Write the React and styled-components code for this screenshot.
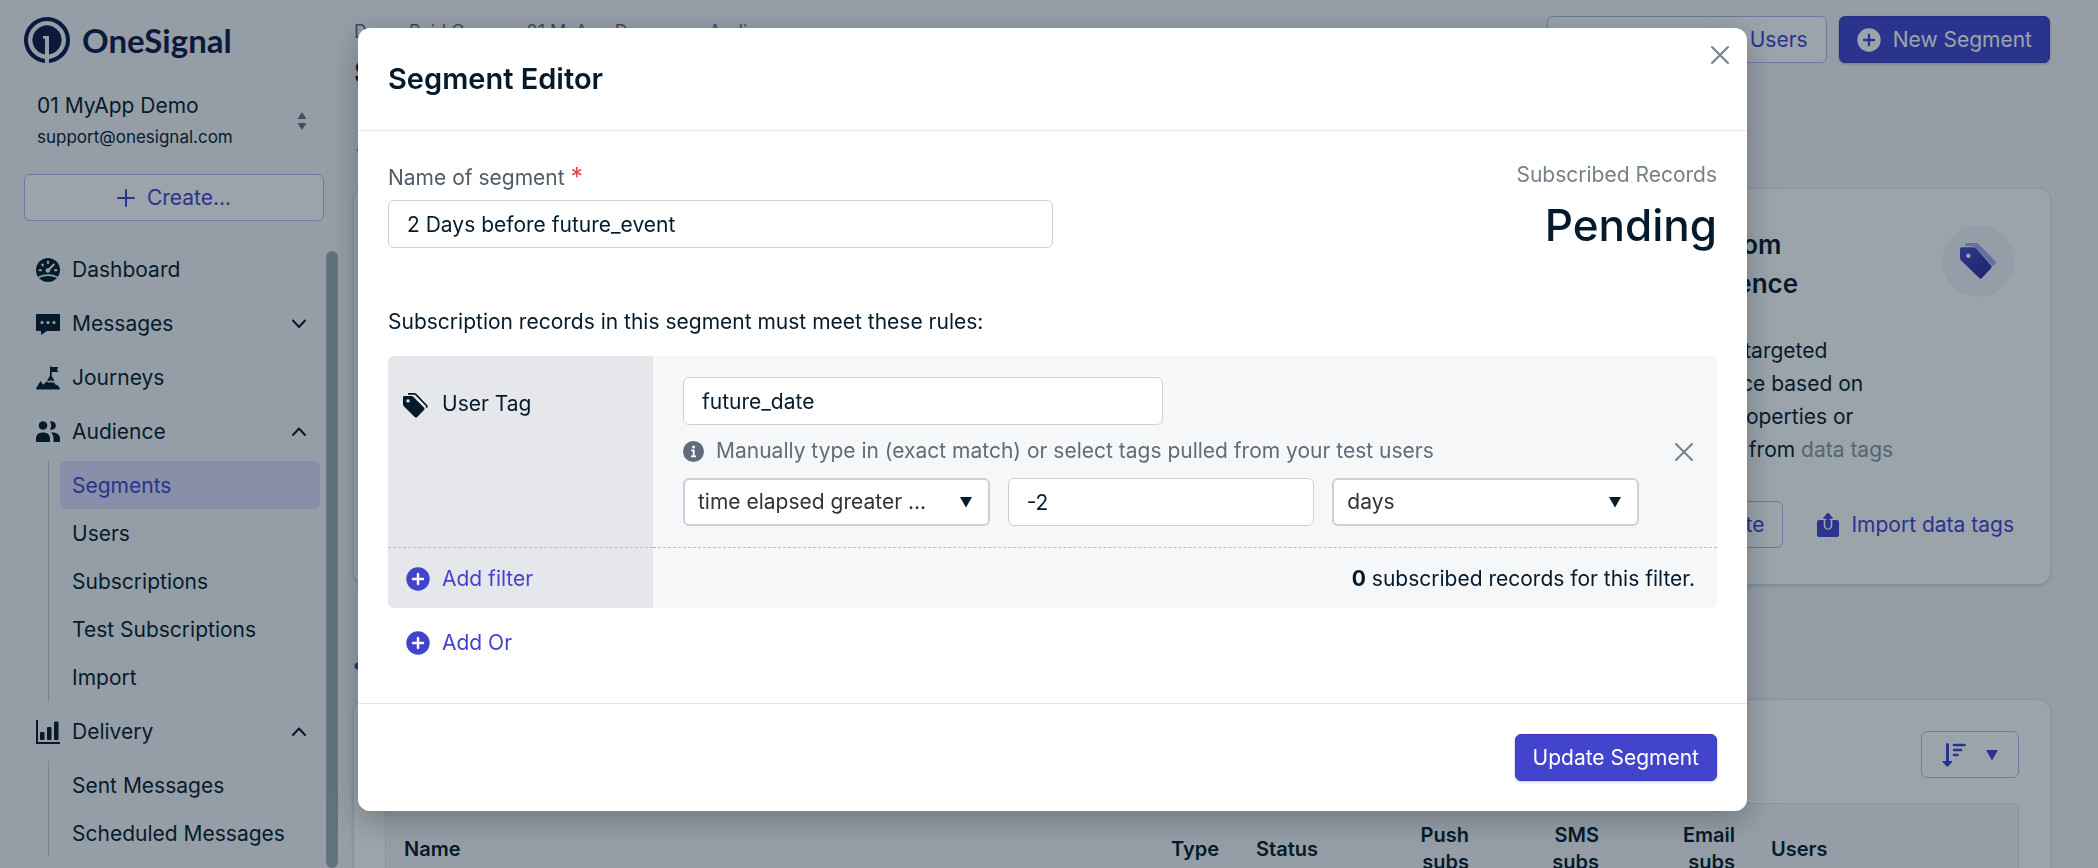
import React from "react";
import styled, { createGlobalStyle, css } from "styled-components";

const ink = "#051b2c";
const purple = "#4344cd";
const muted = "#5f6d7a";

const GlobalStyle = createGlobalStyle`
  *, *::before, *::after { box-sizing: border-box; }
  body {
    margin: 0;
    background: #f6f6f9;
    color: ${ink};
    font-family: Inter, "Liberation Sans", sans-serif;
    font-size: 21px;
    line-height: 32px;
  }
  button, input, select { font: inherit; color: inherit; margin: 0; }
  h1, h2, h3, p, ul { margin: 0; padding: 0; }
  ul { list-style: none; }
  a { color: inherit; text-decoration: none; }
  svg { display: block; flex: none; }
`;

const Page = styled.div`
  display: flex;
  height: 100vh;
  overflow: hidden;
`;

/* Sidebar */
const Sidebar = styled.aside`
  display: flex;
  flex-direction: column;
  flex: none;
  width: 340px;
  padding-top: 17px;
`;
const Logo = styled.a`
  display: flex;
  align-items: center;
  gap: 12px;
  height: 46px;
  margin-left: 24px;
  color: #0f1a44;
  font-family: Lato, Inter, sans-serif;
  font-size: 33px;
  font-weight: 700;
`;
const AppSwitcher = styled.button`
  display: flex;
  align-items: center;
  justify-content: space-between;
  margin: 27px 33px 0 37px;
  padding: 0;
  border: 0;
  background: none;
  text-align: left;
`;
const AppName = styled.span`
  display: block;
`;
const AppEmail = styled.span`
  display: block;
  font-size: 17px;
  line-height: 30px;
`;

const buttonBase = css`
  display: inline-flex;
  align-items: center;
  justify-content: center;
  gap: 12px;
  height: 47px;
  border-radius: 6px;
  white-space: nowrap;
  cursor: pointer;
`;
const OutlineButton = styled.button`
  ${buttonBase}
  border: 1px solid #b9b8ee;
  background: #fff;
  color: ${purple};
  padding: 0 18px;
`;
const SortButton = styled(OutlineButton)`
  gap: 20px;
  padding: 0 20px;
`;
const PrimaryButton = styled.button`
  ${buttonBase}
  border: 1px solid #3a3bbb;
  background: ${purple};
  color: #fff;
  padding: 0 17px;
  box-shadow: 0 1px 3px rgba(5, 27, 44, 0.25);
`;
const LinkButton = styled.button`
  ${buttonBase}
  border: 0;
  padding: 0;
  background: none;
  color: ${purple};
`;
const CreateButton = styled(OutlineButton)`
  margin: 22px 16px 0 24px;
`;
const NavArea = styled.div`
  display: flex;
  flex: 1;
  min-height: 0;
  margin-top: 22px;
`;
const Nav = styled.nav`
  flex: 1;
  overflow: hidden;
`;
const ScrollTrack = styled.div`
  width: 14px;
  padding: 8px 2px 0 0;
`;
const ScrollThumb = styled.div`
  height: 100%;
  border-radius: 6px;
  background: #a0aeb7;
`;
const NavItem = styled.a`
  display: grid;
  grid-template-columns: 24px 1fr 14px;
  column-gap: 12px;
  align-items: center;
  height: 54px;
  padding: 0 20px 0 36px;
`;
const SubList = styled.ul`
  margin: 2px 6px 4px 48px;
  padding-left: 11px;
  border-left: 1px solid #c3ccd4;
`;
const SubLink = styled.a`
  display: block;
  padding: 9px 12px 7px;
  border-radius: 6px;
  white-space: nowrap;
  color: ${(p) => (p.$active ? purple : ink)};
  background: ${(p) => (p.$active ? "#dfdcfb" : "transparent")};
`;

/* Main column */
const Main = styled.main`
  flex: 1;
  min-width: 0;
  padding: 16px 48px 0 14px;
`;
const TopBar = styled.header`
  display: flex;
  align-items: flex-start;
  justify-content: space-between;
  height: 103px;
`;
const Breadcrumb = styled.div`
  display: flex;
  gap: 16px;
  font-size: 18px;
  color: ${muted};
`;
const PageTitle = styled.h1`
  font-size: 30px;
  line-height: 40px;
  margin-top: 4px;
`;
const TopActions = styled.div`
  display: flex;
  gap: 12px;
`;
const BackLink = styled.a`
  display: flex;
  align-items: center;
  width: max-content;
  height: 32px;
  margin: ${(p) => p.$margin};
  color: ${purple};
`;
const Cards = styled.div`
  display: grid;
  grid-template-columns: repeat(3, 1fr);
  gap: 24px;
`;
const Card = styled.section`
  border-radius: 12px;
  background: #fff;
  box-shadow: 0 1px 4px rgba(5, 27, 44, 0.22);
`;
const TipCard = styled(Card)`
  display: flex;
  flex-direction: column;
  padding: 36px;
  height: 395px;
`;
const TipHead = styled.div`
  display: flex;
  justify-content: space-between;
  align-items: flex-start;
`;
const TipTitle = styled.h2`
  font-size: 26px;
  line-height: 39px;
  font-weight: 600;
`;
const TipBadge = styled.div`
  display: grid;
  place-items: center;
  width: 72px;
  height: 72px;
  border-radius: 50%;
  background: #f6f6fb;
`;
const TipText = styled.p`
  margin-top: 31px;
  line-height: 33px;
  white-space: nowrap;
  a { color: #8796a5; }
`;
const TipActions = styled.div`
  display: flex;
  justify-content: flex-end;
  gap: 34px;
  margin-top: auto;
`;
const ListCard = styled(Card)`
  padding: 31px 31px 0;
`;
const ListTools = styled.div`
  display: flex;
  justify-content: flex-end;
  margin-bottom: 25px;
`;
const SegmentsTable = styled.table`
  width: 100%;
  table-layout: fixed;
  border-collapse: separate;
  border-spacing: 0;
  border: 1px solid #e0e5ea;
  border-radius: 6px;
  background: #f6f6f9;
`;
const Th = styled.th`
  width: ${(p) => p.$width || "auto"};
  height: 90px;
  padding: 0 18px;
  font-size: 20px;
  line-height: 27px;
  font-weight: 600;
  text-align: ${(p) => p.$align || "left"};
`;

/* Dialog */
const Overlay = styled.div`
  position: fixed;
  inset: 0;
  display: flex;
  justify-content: center;
  align-items: flex-start;
  padding: 28px 0 28px 7px;
  background: rgba(5, 27, 44, 0.4);
`;
const Dialog = styled.div`
  position: relative;
  width: 100%;
  max-width: 1389px;
  border-radius: 12px;
  background: #fff;
  box-shadow: 0 8px 30px rgba(20, 20, 20, 0.3);
`;
const DialogHeader = styled.div`
  padding: 31px 30px;
  border-bottom: 1px solid #e4e6e9;
`;
const DialogTitle = styled.h2`
  font-size: 29px;
  line-height: 40px;
  font-weight: 600;
`;
const IconButton = styled.button`
  display: grid;
  place-items: center;
  width: 32px;
  height: 32px;
  padding: 0;
  border: 0;
  background: none;
  color: #74808c;
`;
const CloseButton = styled(IconButton)`
  position: absolute;
  top: 11px;
  right: 11px;
`;
const DialogBody = styled.div`
  padding: 28px 30px 37px;
`;
const NameRow = styled.div`
  display: flex;
  justify-content: space-between;
`;
const NameField = styled.div`
  width: 50%;
  padding-top: 3px;
`;
const Label = styled.label`
  display: flex;
  gap: 6px;
  margin-bottom: 6px;
  color: #4d5c68;
`;
const Required = styled.span`
  font-size: 25px;
  line-height: 30px;
  color: #ea4350;
`;
const fieldBase = css`
  height: 48px;
  width: ${(p) => p.$width || "100%"};
  border: 1px solid #ccd1d9;
  border-radius: 6px;
  background: #fff;
`;
const Input = styled.input`
  ${fieldBase}
  padding: 0 18px;
`;
const SelectWrap = styled.div`
  display: grid;
  align-items: center;
  > * { grid-area: 1 / 1; }
  > svg { justify-self: end; margin-right: 18px; pointer-events: none; }
`;
const Select = styled.select`
  ${fieldBase}
  appearance: none;
  border-width: 2px;
  padding: 0 13px;
  color: #333;
`;
const Summary = styled.div`
  text-align: right;
`;
const SummaryLabel = styled.div`
  color: #74808c;
`;
const SummaryValue = styled.div`
  font-size: 44px;
  line-height: 68px;
  font-weight: 500;
`;
const RulesIntro = styled.p`
  margin: 47px 0 18px;
`;
const FilterBox = styled.div`
  display: grid;
  grid-template-columns: 265px 1fr;
  border-radius: 6px;
  overflow: hidden;
  background: #f6f7f9;
`;
const FilterSide = styled.div`
  display: flex;
  align-items: flex-start;
  gap: 14px;
  padding: 32px 14px;
  background: #e6e7eb;
  > svg { margin-top: 4px; }
`;
const FilterMain = styled.div`
  display: flex;
  align-items: center;
  justify-content: space-between;
  padding: 21px 17px 21px 30px;
`;
const FilterFields = styled.div`
  width: 956px;
`;
const Hint = styled.div`
  display: flex;
  align-items: center;
  gap: 12px;
  margin: 10px 0 11px;
  color: ${muted};
`;
const FieldGrid = styled.div`
  display: grid;
  grid-template-columns: repeat(3, 1fr);
  gap: 18px;
`;
const FilterFootSide = styled.div`
  display: flex;
  align-items: center;
  height: 61px;
  padding: 2px 0 0 18px;
  border-top: 1px dashed #b9bfc6;
  background: #e6e7eb;
`;
const FilterFootMain = styled.div`
  display: flex;
  align-items: center;
  justify-content: flex-end;
  gap: 6px;
  padding: 2px 22px 0 0;
  border-top: 1px dashed #b9bfc6;
`;
const AddOrRow = styled.div`
  padding: 11px 18px 0;
`;
const DialogFooter = styled.div`
  display: flex;
  justify-content: flex-end;
  padding: 30px;
  border-top: 1px solid #e4e6e9;
`;

/* Icons */
const LogoMark = () => (
  <svg width="46" height="46" viewBox="0 0 46 46" fill="currentColor">
    <path d="M21 46V41.900A19 19 0 1 1 25 41.900V46A23 23 0 1 0 21 46Z" />
    <path d="M21 37.400A14.600 14.600 0 1 1 25 37.400V19H19V21.500H21Z" />
  </svg>
);
const SortMark = () => (
  <svg width="10" height="20" viewBox="0 0 10 20" fill="#667580">
    <path d="M5 1l4.500 7H.5zM5 19l4.500-7H.5z" />
  </svg>
);
const Plus = () => (
  <svg width="18" height="18" viewBox="0 0 18 18" stroke="currentColor" strokeWidth="2" strokeLinecap="round">
    <path d="M9 1v16M1 9h16" />
  </svg>
);
const Cross = () => (
  <svg width="20" height="20" viewBox="0 0 20 20" stroke="currentColor" strokeWidth="2" strokeLinecap="round">
    <path d="M2 2l16 16M18 2L2 18" />
  </svg>
);
const Chevron = ({ up }) => (
  <svg width="14" height="10" viewBox="0 0 14 10" fill="none" stroke={ink} strokeWidth="2" strokeLinecap="round" strokeLinejoin="round">
    <path d={up ? "M1 8l6-6.500L13 8" : "M1 1.500L7 8l6-6.500"} />
  </svg>
);
const Caret = () => (
  <svg width="12" height="12" viewBox="0 0 12 12" fill="currentColor">
    <path d="M0 1h12L6 11.500z" />
  </svg>
);
const PlusCircle = ({ cut = "#fff" }) => (
  <svg width="24" height="24" viewBox="0 0 24 24">
    <circle cx="12" cy="12" r="11.700" fill="currentColor" />
    <path d="M12 7v10M7 12h10" stroke={cut} strokeWidth="2.400" strokeLinecap="round" />
  </svg>
);
const Info = () => (
  <svg width="21" height="21" viewBox="0 0 21 21">
    <circle cx="10.500" cy="10.500" r="10.500" fill={muted} />
    <circle cx="10.500" cy="6" r="1.500" fill="#fff" />
    <path d="M8.300 9.500h2.400v5.500M8 15.300h5" stroke="#fff" strokeWidth="1.800" fill="none" />
  </svg>
);
const TagIcon = () => (
  <svg width="26" height="26" viewBox="0 0 26 26" fill={ink}>
    <path d="M2 4h7.500a3 3 0 0 1 2 1L22 15.500a2 2 0 0 1 0 2.600L15.200 25a2 2 0 0 1-2.500 0L2 14.500a3 3 0 0 1-1-2V5a1 1 0 0 1 1-1zM6 7.200a1.700 1.700 0 1 0 0 3.400 1.700 1.700 0 0 0 0-3.400z" fillRule="evenodd" />
    <path d="M6 1.800h6a3 3 0 0 1 2 .9L24.400 13.500a2 2 0 0 1 0 2.300" fill="none" stroke={ink} strokeWidth="1.700" />
  </svg>
);
const TagBadgeIcon = () => (
  <svg width="36" height="36" viewBox="0 0 36 36">
    <defs>
      <linearGradient id="tagShade" x1="0" y1="0" x2="1" y2="1">
        <stop offset="0" stopColor="#4a4cc9" />
        <stop offset="1" stopColor="#2a2a99" />
      </linearGradient>
    </defs>
    <path d="M5 2a2 2 0 0 1 2-2h9a4 4 0 0 1 3 1.200L35.200 18a2 2 0 0 1 0 3L33 23.200 17 6.500A8 8 0 0 0 12 3.200L5 3z" fill="#a9a8e8" />
    <path d="M2 4.200h11a5 5 0 0 1 3.400 1.500L31.200 22.600a2 2 0 0 1 0 2.400L22 35a2 2 0 0 1-2.800 0L1.400 17.800A4 4 0 0 1 0 15V6.200a2 2 0 0 1 2-2z" fill="url(#tagShade)" />
    <circle cx="8.300" cy="12.800" r="2.200" fill="#fff" />
  </svg>
);
const UploadIcon = () => (
  <svg width="22" height="24" viewBox="0 0 22 24" fill="none">
    <rect x="0" y="7" width="22" height="17" rx="2" fill="currentColor" />
    <path d="M7.500 7v5.500a3.500 3.500 0 0 0 7 0V7" stroke="#fff" strokeWidth="1.600" />
    <path d="M11 3v11" stroke="currentColor" strokeWidth="3" strokeLinecap="round" />
    <path d="M6.500 5.200L11 0l4.500 5.200z" fill="currentColor" stroke="currentColor" strokeLinejoin="round" />
  </svg>
);
const SortIcon = () => (
  <svg width="24" height="24" viewBox="0 0 24 24" fill="none" stroke="currentColor" strokeLinecap="round">
    <path d="M5.500 1.500V18" strokeWidth="3" />
    <path d="M1 18.500h9L5.500 23.500z" fill="currentColor" />
    <path d="M12 2h10.500M12 7h7M12 12h3.500" strokeWidth="2.600" />
  </svg>
);
const GaugeIcon = () => (
  <svg width="24" height="24" viewBox="0 0 24 24">
    <circle cx="12" cy="12" r="12" fill={ink} />
    <path d="M3.500 12.300h1.500M19 12.300h1.500M12 3.800v1.200M6.200 6.500l.8.800M12 12.500l5.800-6" stroke="#f6f6f9" strokeWidth="2" strokeLinecap="round" />
    <circle cx="11.800" cy="12.500" r="2.300" fill="#f6f6f9" />
    <path d="M2.500 19.300Q12 15 21.500 19.300" stroke="#f6f6f9" strokeWidth="1.600" fill="none" />
  </svg>
);
const ChatIcon = () => (
  <svg width="24" height="24" viewBox="0 0 24 24">
    <path d="M1 2h22a1 1 0 0 1 1 1v15a1 1 0 0 1-1 1H11l-6 4v-4H1a1 1 0 0 1-1-1V3a1 1 0 0 1 1-1z" fill={ink} />
    <g fill="#f6f6f9">
      <circle cx="6" cy="10.500" r="1.600" />
      <circle cx="12" cy="10.500" r="1.600" />
      <circle cx="18" cy="10.500" r="1.600" />
    </g>
  </svg>
);
const SummitIcon = () => (
  <svg width="24" height="24" viewBox="0 0 24 24" fill={ink}>
    <path d="M14 .5h1.700V1H22.300L21 3.500 22.300 6H15.700v4L18.300 14.500l-1.500.8-1.800-1.300-1.800 1.300-2-.8L14 9.500z" />
    <path d="M.5 23.500L0 22.500 4.500 15l2.700 3.700 1.300-1.200 2-2 1.500.5 1.500 1 1.500-1.200 1.700 1.200 1.300-.8 2 3 1.500-.2 2.500 3.500-.5 1z" />
  </svg>
);
const PeopleIcon = () => (
  <svg width="24" height="24" viewBox="0 0 24 24" fill={ink}>
    <circle cx="7" cy="5.500" r="4.300" />
    <path d="M0 22v-3.500C0 14.500 3 12.500 7 12.500s7 2 7 6V22z" />
    <path d="M14 1.500a4.300 4.300 0 1 1 0 8c1.600-2.400 1.600-5.600 0-8z" />
    <path d="M15 12.700c5-.8 9 1.600 9 5.800V22h-6.500v-3.500c0-2.400-.8-4.400-2.500-5.800z" />
  </svg>
);
const BarsIcon = () => (
  <svg width="24" height="24" viewBox="0 0 24 24" fill={ink}>
    <path d="M0 0h2v22h22v2H0z" />
    <rect x="4" y="12" width="4.500" height="8" rx="1" />
    <rect x="11" y="7" width="4.500" height="13" rx="1" />
    <rect x="18" y="1.500" width="4.500" height="18.500" rx="1" />
  </svg>
);
const ArrowLeft = ({ weight }) => (
  <svg width="24" height="8" viewBox="0 0 24 8" stroke="currentColor" strokeWidth={weight} strokeLinecap="round">
    <path d="M4 4h16" />
  </svg>
);

const NAV = [
  { label: "Dashboard", icon: GaugeIcon },
  { label: "Messages", icon: ChatIcon, chevron: "down" },
  { label: "Journeys", icon: SummitIcon },
  {
    label: "Audience",
    icon: PeopleIcon,
    chevron: "up",
    items: ["Segments", "Users", "Subscriptions", "Test Subscriptions", "Import"],
  },
  { label: "Delivery", icon: BarsIcon, chevron: "up", items: ["Sent Messages", "Scheduled Messages"] },
];

export default function App() {
  return (
    <>
      <GlobalStyle />
      <Page>
        <Sidebar>
          <Logo href="#">
            <LogoMark />
            OneSignal
          </Logo>
          <AppSwitcher>
            <span>
              <AppName>01 MyApp Demo</AppName>
              <AppEmail>support@onesignal.com</AppEmail>
            </span>
            <SortMark />
          </AppSwitcher>
          <CreateButton>
            <Plus />
            Create...
          </CreateButton>
          <NavArea>
            <Nav>
              {NAV.map(({ label, icon: Icon, chevron, items }) => (
                <React.Fragment key={label}>
                  <NavItem href="#">
                    <Icon />
                    <span>{label}</span>
                    {chevron && <Chevron up={chevron === "up"} />}
                  </NavItem>
                  {items && (
                    <SubList>
                      {items.map((item) => (
                        <li key={item}>
                          <SubLink href="#" $active={item === "Segments"}>{item}</SubLink>
                        </li>
                      ))}
                    </SubList>
                  )}
                </React.Fragment>
              ))}
            </Nav>
            <ScrollTrack>
              <ScrollThumb />
            </ScrollTrack>
          </NavArea>
        </Sidebar>

        <Main>
          <TopBar>
            <div>
              <Breadcrumb>
                <span>Demo Paid Org</span>
                <span>&gt;</span>
                <span>01 MyApp Demo</span>
                <span>&gt;</span>
                <span>Audience</span>
              </Breadcrumb>
              <PageTitle>Segments</PageTitle>
            </div>
            <TopActions>
              <OutlineButton>
                <UploadIcon />
                Update/Import Users
              </OutlineButton>
              <PrimaryButton>
                <PlusCircle cut={purple} />
                New Segment
              </PrimaryButton>
            </TopActions>
          </TopBar>
          <BackLink href="#" $margin="15px 0 23px" aria-label="Back">
            <ArrowLeft weight={2} />
          </BackLink>
          <Cards>
            <TipCard />
            <TipCard />
            <TipCard>
              <TipHead>
                <TipTitle>
                  Use segments from
                  <br />
                  your whole audience
                </TipTitle>
                <TipBadge>
                  <TagBadgeIcon />
                </TipBadge>
              </TipHead>
              <TipText>
                Create a much more targeted
                <br />
                specific main audience based on
                <br />
                some custom user properties or
                <br />
                external push events from <a href="#">data tags</a>
              </TipText>
              <TipActions>
                <OutlineButton>Create</OutlineButton>
                <LinkButton>
                  <UploadIcon />
                  Import data tags
                </LinkButton>
              </TipActions>
            </TipCard>
          </Cards>
          <BackLink href="#" $margin="66px 0 18px" aria-label="Previous">
            <ArrowLeft weight={7} />
          </BackLink>
          <ListCard>
            <ListTools>
              <SortButton aria-label="Sort">
                <SortIcon />
                <Caret />
              </SortButton>
            </ListTools>
            <SegmentsTable>
              <thead>
                <tr>
                  <Th>Name</Th>
                  <Th $width="85px">Type</Th>
                  <Th $width="119px">Status</Th>
                  <Th $width="130px" $align="right">Push<br />subs</Th>
                  <Th $width="130px" $align="right">SMS<br />subs</Th>
                  <Th $width="136px" $align="right">Email<br />subs</Th>
                  <Th $width="265px">Users</Th>
                </tr>
              </thead>
            </SegmentsTable>
          </ListCard>
        </Main>
      </Page>

      <Overlay>
        <Dialog role="dialog" aria-modal="true" aria-labelledby="dialog-title">
          <DialogHeader>
            <DialogTitle id="dialog-title">Segment Editor</DialogTitle>
            <CloseButton aria-label="Close">
              <Cross />
            </CloseButton>
          </DialogHeader>
          <DialogBody>
            <NameRow>
              <NameField>
                <Label htmlFor="segment-name">
                  Name of segment <Required>*</Required>
                </Label>
                <Input id="segment-name" defaultValue="2 Days before future_event" />
              </NameField>
              <Summary>
                <SummaryLabel>Subscribed Records</SummaryLabel>
                <SummaryValue>Pending</SummaryValue>
              </Summary>
            </NameRow>
            <RulesIntro>Subscription records in this segment must meet these rules:</RulesIntro>
            <FilterBox>
              <FilterSide>
                <TagIcon />
                User Tag
              </FilterSide>
              <FilterMain>
                <FilterFields>
                  <Input $width="480px" aria-label="Tag" defaultValue="future_date" />
                  <Hint>
                    <Info />
                    Manually type in (exact match) or select tags pulled from your test users
                  </Hint>
                  <FieldGrid>
                    <SelectWrap>
                      <Select aria-label="Condition">
                        <option>time elapsed greater ...</option>
                      </Select>
                      <Caret />
                    </SelectWrap>
                    <Input aria-label="Amount" defaultValue="-2" />
                    <SelectWrap>
                      <Select aria-label="Unit">
                        <option>days</option>
                      </Select>
                      <Caret />
                    </SelectWrap>
                  </FieldGrid>
                </FilterFields>
                <IconButton aria-label="Remove filter">
                  <Cross />
                </IconButton>
              </FilterMain>
              <FilterFootSide>
                <LinkButton>
                  <PlusCircle />
                  Add filter
                </LinkButton>
              </FilterFootSide>
              <FilterFootMain>
                <strong>0</strong> subscribed records for this filter.
              </FilterFootMain>
            </FilterBox>
            <AddOrRow>
              <LinkButton>
                <PlusCircle />
                Add Or
              </LinkButton>
            </AddOrRow>
          </DialogBody>
          <DialogFooter>
            <PrimaryButton>Update Segment</PrimaryButton>
          </DialogFooter>
        </Dialog>
      </Overlay>
    </>
  );
}
